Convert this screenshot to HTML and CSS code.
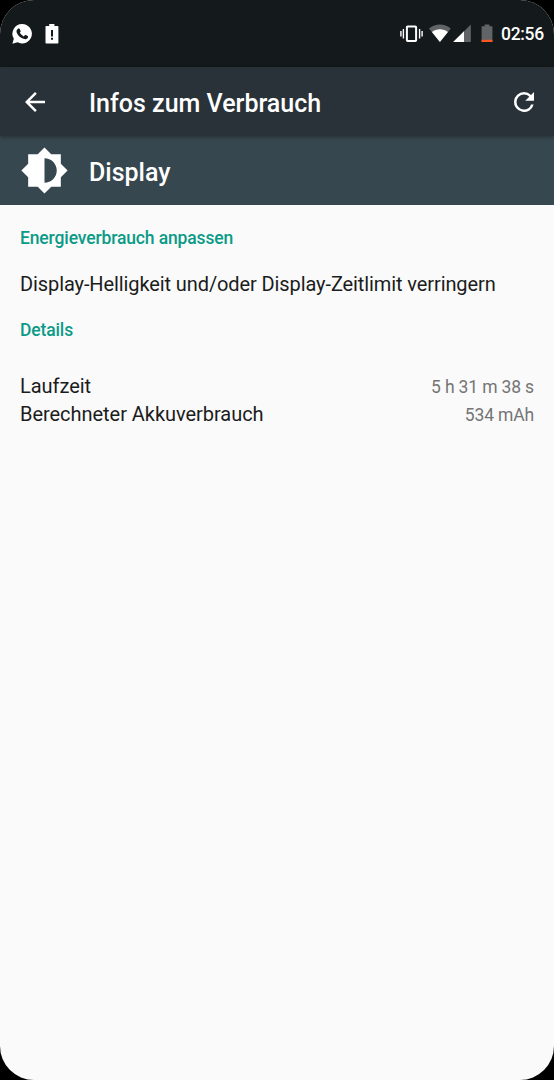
FILE: index.html
```html
<!DOCTYPE html>
<html lang="de">
<head>
<meta charset="utf-8">
<title>Infos zum Verbrauch</title>
<link rel="stylesheet" href="styles.css">
</head>
<body>
<div class="screen">
  <div class="status-bar">
    <svg class="whatsapp" width="20" height="20" viewBox="0 0 20 20"><path fill="#fff" d="M10.2.1a9.7 9.7 0 1 1-4.7 18.2L.4 19.7l1.4-4.9A9.7 9.7 0 0 1 10.2.1z"/><path fill="#14191c" d="M6.200 4.600c.4-.3 1.200-.3 1.500.3l.9 2c.2.500-.1 1-.8 1.700.9 1.800 2.200 3 4 3.800l1-1.200c.3-.3.600-.4 1-.2l1.900 1c.5.300.4 1 .1 1.700-.6 1.200-2.100 1.700-3.500 1.400-3.900-.9-6.700-3.500-7.700-6.800-.4-1.400.4-3 1.600-3.700z"/></svg>
    <svg class="battery-alert" width="14" height="20" viewBox="0 0 14 20"><path fill="#fff" d="M4.200 0h5.200v2h3.300q.7 0 .7.700v16.100q0 .7-.7.700H1.200q-.7 0-.7-.7V2.700q0-.7.7-.7h3z"/><path fill="#14191c" d="M6 6h2v6.500H6zm0 7.800h2v2H6z"/></svg>
    <svg class="vibrate" width="24" height="20" viewBox="0 0 24 20"><rect x="6.900" y="2.400" width="9.200" height="14.600" rx=".8" fill="none" stroke="#fff" stroke-width="2"/><path stroke="#fff" stroke-width="1.400" d="M.9 7v5.500M3.400 5v9.500M19.600 5v9.500M22.100 7v5.500"/></svg>
    <svg class="wifi" width="22" height="20" viewBox="0 0 22 20"><path fill="#616467" d="M0 4.500C6.500-.7 15.300-.7 21.800 4.500L10.900 18z"/><path fill="#fff" d="M2.900 8C7.500 4.400 14.300 4.400 18.900 8l-8 10z"/></svg>
    <svg class="signal" width="18" height="20" viewBox="0 0 18 20"><path fill="#616467" d="M17.800.6V18H.2z"/><path fill="#fff" d="M11 7.300V18H.2z"/></svg>
    <svg class="battery" width="12" height="20" viewBox="0 0 12 20"><path fill="#616467" d="M3.600.6h4.800v1.600h3V18H.6V2.200h3z"/><path fill="#ff5722" d="M.6 15.800h10.800V18H.6z"/></svg>
    <span class="clock">02:56</span>
  </div>
  <header class="toolbar">
    <svg width="30" height="30" viewBox="0 0 24 24" fill="#fff"><path d="M20 11H7.830l5.590-5.590L12 4l-8 8 8 8 1.410-1.410L7.830 13H20v-2z"/></svg>
    <h1 class="title">Infos zum Verbrauch</h1>
    <svg width="30" height="30" viewBox="0 0 24 24" fill="#fff"><path d="M17.650 6.350A7.958 7.958 0 0 0 12 4a8 8 0 1 0 7.730 10h-2.080A5.990 5.990 0 0 1 12 18a6 6 0 1 1 0-12c1.660 0 3.140.69 4.220 1.780L13 11h7V4l-2.350 2.350z"/></svg>
  </header>
  <div class="entry">
    <svg class="entry-icon" width="49" height="49" viewBox="0 0 24 24" fill="#fff"><path d="M20 15.310L23.310 12 20 8.690V4h-4.690L12 .69 8.690 4H4v4.690L.69 12 4 15.310V20h4.690L12 23.310 15.310 20H20v-4.690zM12 18V6c3.310 0 6 2.690 6 6s-2.690 6-6 6z"/></svg>
    <span class="entry-name">Display</span>
  </div>
  <main class="content">
    <h2 class="section">Energieverbrauch anpassen</h2>
    <p class="hint">Display-Helligkeit und/oder Display-Zeitlimit verringern</p>
    <h2 class="section">Details</h2>
    <dl class="details">
      <div class="row"><dt>Laufzeit</dt><dd>5 h 31 m 38 s</dd></div>
      <div class="row"><dt>Berechneter Akkuverbrauch</dt><dd>534 mAh</dd></div>
    </dl>
  </main>
</div>
</body>
</html>
```
FILE: styles.css
```css
* {
  box-sizing: border-box;
  margin: 0;
}

body {
  background: #000;
  font-family: Roboto, sans-serif;
}

svg {
  display: block;
  flex: none;
}

.screen {
  display: flex;
  flex-direction: column;
  width: 554px;
  height: 1080px;
  overflow: hidden;
  border-radius: 34px;
  background: #fafafa;
}

.status-bar {
  display: flex;
  align-items: center;
  height: 67px;
  padding: 0 10px 0 12px;
  background: #14191c;
}

.battery-alert {
  margin-left: 13px;
}

.vibrate {
  margin-left: auto;
}

.wifi {
  margin-left: 5px;
}

.signal {
  margin-left: 2px;
}

.battery {
  margin-left: 9.5px;
}

.clock {
  width: 43px;
  margin-left: 8.5px;
  color: #fff;
  font-size: 17.5px;
  font-weight: 500;
  letter-spacing: -0.3px;
  line-height: 20px;
}

.toolbar {
  display: flex;
  align-items: center;
  height: 69px;
  padding: 1px 15px 0 19.5px;
  background: #283238;
  box-shadow: 0 1px 4px rgba(0, 0, 0, 0.35);
  z-index: 1;
}

.title {
  flex: 1;
  padding-top: 3px;
  margin-left: 39.5px;
  color: #fff;
  font-size: 25px;
  font-weight: 500;
  line-height: 30px;
}

.entry {
  display: flex;
  align-items: center;
  height: 69px;
  padding-left: 20px;
  background: #37474f;
}

.entry-name {
  padding-top: 4px;
  margin-left: 20px;
  color: #fff;
  font-size: 25px;
  font-weight: 500;
  line-height: 30px;
}

.content {
  padding: 22px 20px 0;
  color: #1b1c1c;
}

.section {
  color: #0b9a87;
  font-size: 17.5px;
  font-weight: 500;
  letter-spacing: -0.13px;
  line-height: 22px;
}

.hint {
  margin: 23px 0 22px;
  font-size: 20px;
  letter-spacing: -0.1px;
  line-height: 25px;
}

.details {
  margin-top: 31px;
}

.row {
  display: flex;
  justify-content: space-between;
  align-items: baseline;
  height: 28px;
  font-size: 20px;
  letter-spacing: -0.04px;
  line-height: 28px;
}

.row dd {
  color: #757575;
  font-size: 17.5px;
  letter-spacing: -0.15px;
}
```
